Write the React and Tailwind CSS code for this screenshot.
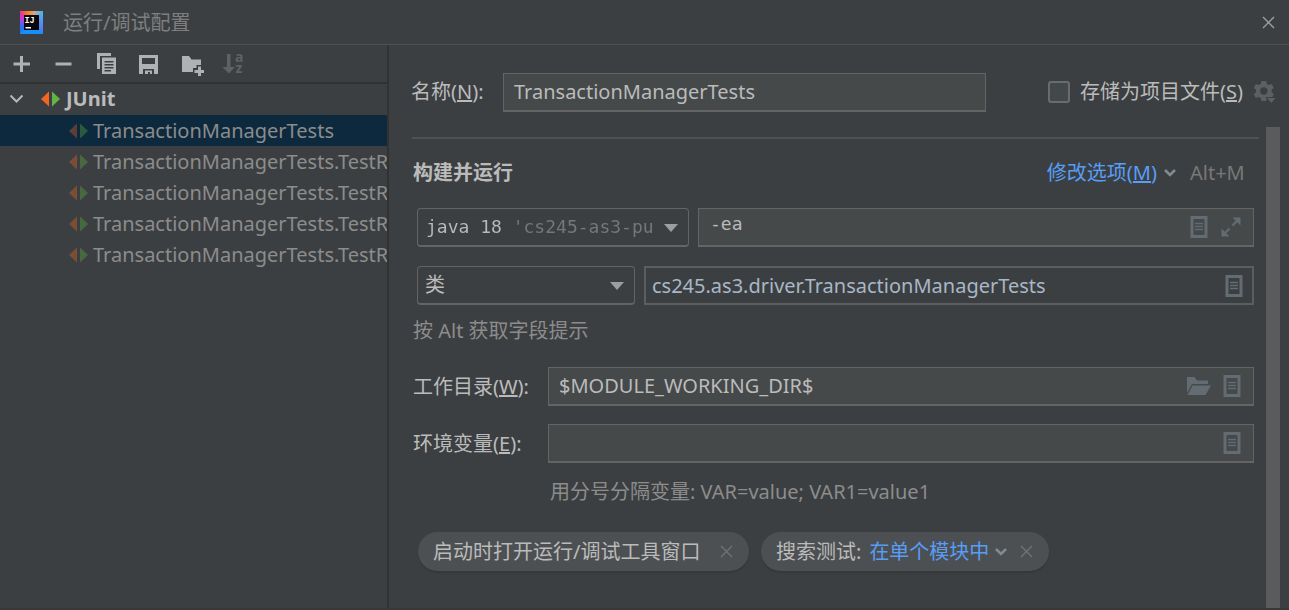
import { useState } from 'react';

const tests = [
  'TransactionManagerTests',
  'TransactionManagerTests.TestRepeatedRuns',
  'TransactionManagerTests.TestRecovery',
  'TransactionManagerTests.TestReadWrite',
  'TransactionManagerTests.TestRollback',
];

function Logo() {
  return (
    <svg width="23" height="23" viewBox="0 0 23 23" aria-hidden="true">
      <defs>
        <linearGradient id="ij-base" x1="0" y1="0" x2="1" y2="1">
          <stop offset="0" stopColor="#fc801d" />
          <stop offset="0.22" stopColor="#fe2857" />
          <stop offset="0.5" stopColor="#7a5af0" />
          <stop offset="0.75" stopColor="#007efc" />
          <stop offset="1" stopColor="#1f8ffb" />
        </linearGradient>
        <linearGradient id="ij-right" x1="0" y1="0" x2="0" y2="1">
          <stop offset="0" stopColor="#3cc4f5" />
          <stop offset="0.5" stopColor="#5c8bf5" />
          <stop offset="1" stopColor="#3b7cf0" />
        </linearGradient>
        <linearGradient id="ij-top" x1="0" y1="0" x2="1" y2="0">
          <stop offset="0" stopColor="#f0318c" />
          <stop offset="0.35" stopColor="#fc801d" />
          <stop offset="0.6" stopColor="#d9a08a" />
          <stop offset="1" stopColor="#2cc0f5" />
        </linearGradient>
        <linearGradient id="ij-left" x1="0" y1="0" x2="0" y2="1">
          <stop offset="0" stopColor="#f0318c" />
          <stop offset="0.35" stopColor="#c73bd8" />
          <stop offset="0.7" stopColor="#2a6ff5" />
          <stop offset="1" stopColor="#0a84ff" />
        </linearGradient>
      </defs>
      <rect width="23" height="23" fill="url(#ij-base)" />
      <path d="M0 0H23L19 4H4Z" fill="url(#ij-top)" />
      <path d="M23 0V23L19 19V4Z" fill="url(#ij-right)" />
      <path d="M0 0V23L4 19V4Z" fill="url(#ij-left)" />
      <path d="M0 23H23L19 19H4Z" fill="#1590fa" />
      <rect x="4" y="4" width="15" height="15" fill="#08060b" />
      <text x="4.5" y="11.5" fontFamily="Liberation Mono, monospace" fontWeight="700" fontSize="8.5" fill="#fff">IJ</text>
      <rect x="5.5" y="16" width="5.5" height="1.5" fill="#fff" />
    </svg>
  );
}

function ToolButton({ label, disabled, children }) {
  return (
    <button type="button" aria-label={label} disabled={disabled} className={disabled ? 'h-6 w-6 text-[#5f6264]' : 'h-6 w-6 text-[#afb1b3]'}>
      <svg width="24" height="24" viewBox="0 0 24 24" fill="currentColor" overflow="visible" aria-hidden="true">
        {children}
      </svg>
    </button>
  );
}

function JUnitIcon({ dim }) {
  return (
    <svg width="20" height="16" viewBox="0 0 20 16" className={dim ? 'shrink-0 opacity-35' : 'shrink-0'} aria-hidden="true">
      <path d="M8 0.5V15.5L0 8Z" fill="#f26522" />
      <path d="M11 0.5V15.5L19 8Z" fill="#62b543" />
    </svg>
  );
}

function Chevron() {
  return (
    <svg width="12" height="8" viewBox="0 0 12 8" fill="none" stroke="#7f8b91" strokeWidth="2.6" className="shrink-0" aria-hidden="true">
      <path d="M1 1L6 6L11 1" />
    </svg>
  );
}

function Cross() {
  return (
    <svg width="13" height="13" viewBox="0 0 13 13" fill="none" stroke="currentColor" strokeWidth="1.4" aria-hidden="true">
      <path d="M1 1L12 12M12 1L1 12" />
    </svg>
  );
}

function ListButton() {
  return (
    <button type="button" aria-label="插入宏" className="shrink-0">
      <svg width="18" height="22" viewBox="0 0 18 22" aria-hidden="true">
        <path d="M0.5 0H17.5V22H0.5Z M3.5 3V19H14.5V3Z" fill="#626c72" fillRule="evenodd" />
        <path d="M5 7.5H13M5 10.5H13M5 13.5H13" stroke="#626c72" strokeWidth="1.6" />
      </svg>
    </button>
  );
}

function Triangle() {
  return (
    <svg width="14" height="8" viewBox="0 0 14 8" className="pointer-events-none absolute right-[10px] top-[15px]" aria-hidden="true">
      <path d="M0 0H14L7 8Z" fill="#9b9fa1" />
    </svg>
  );
}

const fieldBox = 'flex h-[39px] min-w-0 flex-1 items-center border border-b-2 border-[#646464] bg-[#45494a]';

export default function App() {
  const [name, setName] = useState('TransactionManagerTests');
  const [selected, setSelected] = useState(0);
  return (
    <div className="flex min-h-screen flex-col border-b-2 border-[#36383a] bg-[#3c3f41] font-['Noto_Sans','Noto_Sans_CJK_SC',sans-serif] text-[20px] leading-7 text-[#bbbbbb]">
      <header className="flex h-[45px] shrink-0 items-center border-b border-[#515151] pl-5 pr-[14px]">
        <Logo />
        <h1 className="ml-5 flex-1 pt-[2px] text-[#7d7f80]">运行/调试配置</h1>
        <button type="button" aria-label="关闭" className="text-[#9b9d9e]"><Cross /></button>
      </header>

      <div className="flex flex-1">
        <aside className="w-[389px] shrink-0 border-r-2 border-[#323232]">
          <div className="flex h-[39px] items-center gap-[18px] border-b-2 border-[#323232] pl-[10px]">
            <ToolButton label="添加"><path d="M10 4H13V10.5H20V13.5H13V20H10V13.5H3.5V10.5H10Z" /></ToolButton>
            <ToolButton label="移除"><path d="M3.5 10.5H19.5V13.5H3.5Z" /></ToolButton>
            <ToolButton label="复制">
              <path d="M3 1H17V4H6V17H3Z" />
              <path d="M8 5.5H22V22H8Z M10.5 9V10.5H19.5V9Z M10.5 12V13.5H19.5V12Z M10.5 15V16.5H19.5V15Z M10.5 18V19.5H17V18Z" fillRule="evenodd" />
            </ToolButton>
            <ToolButton label="保存"><path d="M3 3H22V22H18V17H7V22H3Z M6 6V12H19V6Z M9 18.5H16V22H14V20H12V22H9Z" fillRule="evenodd" /></ToolButton>
            <ToolButton label="新建文件夹">
              <path d="M4 4H11L13.5 7.5H23V13H18.5V16H15V20H4Z" />
              <path d="M20 14.5H23V18H26V21H23V24H20V21H16.5V18H20Z" />
            </ToolButton>
            <ToolButton label="排序" disabled>
              <path d="M7 2H10.500V15H15L8.750 21.500L2.500 15H7Z" />
              <text x="15" y="10" fontFamily="Open Sans, sans-serif" fontWeight="700" fontSize="14">a</text>
              <text x="15.500" y="21" fontFamily="Open Sans, sans-serif" fontWeight="700" fontSize="14">z</text>
            </ToolButton>
          </div>

          <button type="button" aria-expanded="true" className="flex h-[31px] w-full items-center pb-[2px] pl-[9px] font-bold">
            <svg width="15" height="10" viewBox="0 0 15 10" fill="none" stroke="#b4b6b7" strokeWidth="2" aria-hidden="true">
              <path d="M1.5 1.5L7.5 7.5L13.5 1.5" />
            </svg>
            <span className="ml-[17px] flex items-center gap-[5px]"><JUnitIcon />JUnit</span>
          </button>
          <ul>
            {tests.map((t, i) => (
              <li key={t}>
                <button
                  type="button"
                  onClick={() => setSelected(i)}
                  className={i === selected
                    ? 'flex h-[31px] w-full items-center gap-1 overflow-hidden bg-[#0d293e] pl-[69px] text-[#8c8c8c]'
                    : 'flex h-[31px] w-full items-center gap-1 overflow-hidden pl-[69px] text-[#8c8c8c]'}
                >
                  <JUnitIcon dim />
                  <span className="whitespace-nowrap">{t}</span>
                </button>
              </li>
            ))}
          </ul>
        </aside>

        <main className="flex min-w-0 flex-1 flex-col">
          <div className="flex h-[82px] shrink-0 items-center pl-[22px] pr-[13px] pt-[12px]">
            <label htmlFor="cfg-name" className="w-[92px] shrink-0">名称(<u>N</u>):</label>
            <input
              id="cfg-name"
              value={name}
              onChange={(e) => setName(e.target.value)}
              className="h-[39px] w-[483px] min-w-0 border border-b-2 border-[#646464] bg-[#45494a] px-[10px] outline-none"
            />
            <label className="ml-auto flex shrink-0 items-center gap-[10px]">
              <input type="checkbox" className="h-[22px] w-[22px] appearance-none rounded-[3px] border-2 border-[#6b6b6b] bg-[#43494a] checked:bg-[#589df6]" />
              <span className="w-[166px]">存储为项目文件(<u>S</u>)</span>
            </label>
            <button type="button" aria-label="存储设置" className="ml-2 shrink-0">
              <svg width="22" height="22" viewBox="0 0 22 22" fill="#5c6062" aria-hidden="true">
                <path fillRule="evenodd" d="M7.4 0H12.2L12.8 2.9L15 4.1L17.8 3.1L19.8 6.9L17.6 8.8V11.2L19.8 13.1L17.8 16.9L15 15.9L12.8 17.1L12.2 20H7.4L6.8 17.1L4.6 15.9L1.8 16.9L-0.2 13.1L2 11.2V8.8L-0.2 6.9L1.8 3.1L4.6 4.1L6.8 2.9Z M9.8 6.3A3.7 3.7 0 1 0 9.8 13.7A3.7 3.7 0 1 0 9.8 6.3Z" />
                <path d="M12 16.5H22.5L17.5 22.5Z" stroke="#3c3f41" strokeWidth="1" />
              </svg>
            </button>
          </div>

          <div className="flex flex-1">
            <div className="min-w-0 flex-1 pt-[10px]">
              <hr className="ml-[23px] mr-[7px] border-t-2 border-[#515151]" />
              <div className="pl-6 pr-3">
                <div className="flex items-center pt-5">
                  <h2 className="flex-1 font-bold">构建并运行</h2>
                  <a href="#options" className="flex items-center gap-[7px] text-[#589df6]"><span>修改选项(<u>M</u>)</span><Chevron /></a>
                  <span className="ml-[14px] mr-1 w-[60px] text-[#787878]">Alt+M</span>
                </div>

                <div className="mt-[21px] flex gap-[9px] pl-1">
                  <div className="relative h-[39px] w-[272px] shrink-0 rounded-[4px] border border-b-2 border-[#646464]">
                    <select
                      aria-label="JRE"
                      className="h-full w-full appearance-none bg-[linear-gradient(to_right,#bbbbbb_88px,#777777_88px,#777777_234px,transparent_234px)] bg-clip-text pl-2 pr-[36px] font-['DejaVu_Sans_Mono',monospace] text-[18px] text-transparent outline-none"
                    >
                      <option>java 18 'cs245-as3-public'</option>
                    </select>
                    <Triangle />
                  </div>
                  <div className={`${fieldBox} gap-[13px] pl-[11px] pr-3`}>
                    <input aria-label="VM 选项" defaultValue="-ea" className="min-w-0 flex-1 bg-transparent pb-[6px] font-['DejaVu_Sans_Mono',monospace] text-[18px] outline-none" />
                    <ListButton />
                    <button type="button" aria-label="展开" className="shrink-0">
                      <svg width="20" height="20" viewBox="0 0 20 20" fill="#626c72" stroke="#626c72" aria-hidden="true">
                        <path d="M11.5 0.5H19.5V8.5Z M0.5 11.5V19.5H8.5Z" stroke="none" />
                        <path d="M16.5 3.5L11.5 8.5M3.5 16.5L8.5 11.5" strokeWidth="2.2" />
                      </svg>
                    </button>
                  </div>
                </div>

                <div className="mt-[19px] flex gap-[9px] pl-1">
                  <div className="relative h-[39px] w-[218px] shrink-0 rounded-[4px] border border-b-2 border-[#646464]">
                    <select aria-label="测试类型" className="h-full w-full appearance-none bg-transparent pl-[7px] pr-[36px] outline-none">
                      <option>类</option>
                      <option>方法</option>
                    </select>
                    <Triangle />
                  </div>
                  <div className="flex h-[39px] min-w-0 flex-1 items-center border-2 border-[#5b5d5f] pl-[6px] pr-[9px]">
                    <input aria-label="测试类" defaultValue="cs245.as3.driver.TransactionManagerTests" className="min-w-0 flex-1 bg-transparent text-[#a9b7c6] outline-none" />
                    <ListButton />
                  </div>
                </div>

                <p className="mt-3 text-[#8c8c8c]">按 Alt 获取字段提示</p>

                <div className="mt-[22px] flex items-center">
                  <label htmlFor="cfg-dir" className="w-[135px] shrink-0">工作目录(<u>W</u>):</label>
                  <div className={`${fieldBox} gap-3 pl-[10px] pr-3`}>
                    <input id="cfg-dir" defaultValue="$MODULE_WORKING_DIR$" className="min-w-0 flex-1 bg-transparent outline-none" />
                    <button type="button" aria-label="浏览" className="shrink-0">
                      <svg width="24" height="20" viewBox="0 0 24 20" fill="#626c72" aria-hidden="true">
                        <path d="M0 1H7.5L10 4.5H21V8H5L0 17Z" />
                        <path d="M5.5 9.5H24L18.5 19H0.5Z" />
                      </svg>
                    </button>
                    <ListButton />
                  </div>
                </div>

                <div className="mt-[18px] flex items-center">
                  <label htmlFor="cfg-env" className="w-[135px] shrink-0">环境变量(<u>E</u>):</label>
                  <div className={`${fieldBox} pl-[10px] pr-3`}>
                    <input id="cfg-env" className="min-w-0 flex-1 bg-transparent outline-none" />
                    <ListButton />
                  </div>
                </div>
                <p className="mt-[15px] pl-[137px] text-[#8c8c8c]">用分号分隔变量: VAR=value; VAR1=value1</p>

                <div className="mt-[26px] flex gap-3 pl-[5px]">
                  <div className="flex h-[39px] min-w-[331px] items-center justify-between gap-4 rounded-full bg-[#4c5052] pl-[15px] pr-4 shadow-[0_2px_1px_#36393b]">
                    <span>启动时打开运行/调试工具窗口</span>
                    <button type="button" aria-label="移除选项" className="text-[#6e7375]"><Cross /></button>
                  </div>
                  <div className="flex h-[39px] items-center rounded-full bg-[#4c5052] pl-[15px] pr-4 shadow-[0_2px_1px_#36393b]">
                    <span>搜索测试:</span>
                    <a href="#scope" className="ml-2 flex items-center gap-[6px] text-[#589df6]">在单个模块中<Chevron /></a>
                    <button type="button" aria-label="移除选项" className="ml-[13px] text-[#6e7375]"><Cross /></button>
                  </div>
                </div>
              </div>
            </div>
            <div className="mr-[9px] w-[14px] shrink-0 bg-[#5a5b5c]" />
          </div>
        </main>
      </div>
    </div>
  );
}
